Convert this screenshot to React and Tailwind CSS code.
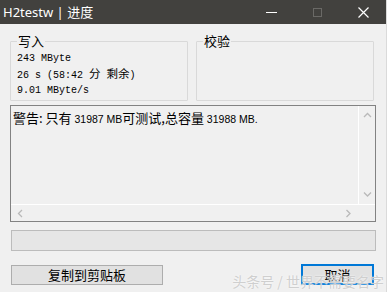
import React from "react";

const cjk = { fontFamily: '"Noto Sans CJK SC", "Noto Sans", sans-serif' };
const mono = { fontFamily: '"Liberation Mono", "Noto Sans CJK SC", monospace' };
const sans = { fontFamily: '"Liberation Sans", sans-serif' };

const GroupBox = ({ title, children }) => (
  <fieldset className="w-[179px] h-[68px] border border-[#d9d9d9] pl-[6px] pt-[2px] rounded-[1px]">
    <legend className="px-[1px] text-[13px] leading-[16px] text-black" style={cjk}>
      {title}
    </legend>
    {children}
  </fieldset>
);

const Chevron = ({ dir }) => {
  const paths = {
    up: "M1 5 L4.5 1.5 L8 5",
    down: "M1 1.5 L4.5 5 L8 1.5",
    left: "M5 1 L1.5 4.5 L5 8",
    right: "M1.5 1 L5 4.5 L1.5 8",
  };
  const vertical = dir === "up" || dir === "down";
  return (
    <svg width={vertical ? 9 : 7} height={vertical ? 7 : 9} viewBox={vertical ? "0 0 9 7" : "0 0 7 9"}>
      <path d={paths[dir]} fill="none" stroke="#b9b9b9" strokeWidth="1.3" />
    </svg>
  );
};

const App = () => {
  return (
    <div className="relative w-[387px] h-[292px] bg-[#f0f0f0] overflow-hidden border-r border-[#dadada]">
      {/* title bar */}
      <div className="h-[24px] bg-[#42413e] flex items-center text-white">
        <span className="pl-[3px] text-[13px] leading-none" style={{ fontFamily: '"Noto Sans", "Noto Sans CJK SC", sans-serif' }}>
          H2testw | <span style={cjk}>进度</span>
        </span>
        <div className="ml-auto flex items-center h-full">
          <div className="w-[46px] h-full flex items-center justify-center">
            <div className="w-[11px] h-[1px] bg-white" />
          </div>
          <div className="w-[46px] h-full flex items-center justify-center">
            <div className="w-[9px] h-[9px] border border-[#6a6966]" />
          </div>
          <div className="w-[46px] h-full flex items-center justify-center">
            <svg width="11" height="11" viewBox="0 0 11 11">
              <path d="M0.5 0.5 L10.5 10.5 M10.5 0.5 L0.5 10.5" stroke="#fff" strokeWidth="1.2" />
            </svg>
          </div>
        </div>
      </div>

      <div className="pl-[10px] pr-[12px]">
        {/* group boxes */}
        <div className="flex gap-[8px] mt-[9px]">
          <GroupBox title="写入">
            <div className="text-[10px] leading-[15px] text-black" style={mono}>
              <div>243 MByte</div>
              <div>
                26 s (58:42 <span className="text-[11.5px]" style={cjk}>分</span> <span className="text-[11.5px]" style={cjk}>剩余</span>)
              </div>
              <div>9.01 MByte/s</div>
            </div>
          </GroupBox>
          <GroupBox title="校验" />
        </div>

        {/* log area */}
        <div className="mt-[4px] w-[366px] h-[117px] border border-[#828282] flex flex-col">
          <div className="flex flex-1 min-h-0">
            <div className="flex-1 pl-[2px] pt-[3px] text-[13px] leading-[17px] text-black" style={cjk}>
              警告: 只有<span className="text-[10.5px]" style={sans}> 31987 MB</span>可测试,总容量<span className="text-[10.5px]" style={sans}> 31988 MB.</span>
            </div>
            <div className="w-[17px] border-l border-white flex flex-col items-center justify-between py-[6px]">
              <Chevron dir="up" />
              <Chevron dir="down" />
            </div>
          </div>
          <div className="h-[17px] flex border-t border-white">
            <div className="flex-1 flex items-center justify-between px-[6px]">
              <Chevron dir="left" />
              <Chevron dir="right" />
            </div>
            <div className="w-[17px]" />
          </div>
        </div>

        {/* progress bar */}
        <div className="mt-[8px] ml-[1px] w-[365px] h-[21px] bg-[#e6e6e6] border border-[#bcbcbc]" />

        {/* buttons */}
        <div className="mt-[13px] flex justify-between items-center ml-[1px]">
          <button className="w-[152px] h-[20px] bg-[#e1e1e1] border border-[#adadad] text-[13px] leading-none text-black" style={cjk}>
            复制到剪贴板
          </button>
          <button className="w-[73px] h-[21px] bg-[#e1e1e1] border-2 border-[#0078d7] text-[13px] leading-none text-black" style={cjk}>
            取消
          </button>
        </div>
      </div>

      {/* watermark */}
      <div
        className="absolute right-[2px] bottom-[4px] text-[14px] leading-none text-[#cfcfcf] [text-shadow:0_0_2px_#ffffff]"
        style={cjk}
      >
        头条号 / 世界不需要名字
      </div>
    </div>
  );
};

export default App;
